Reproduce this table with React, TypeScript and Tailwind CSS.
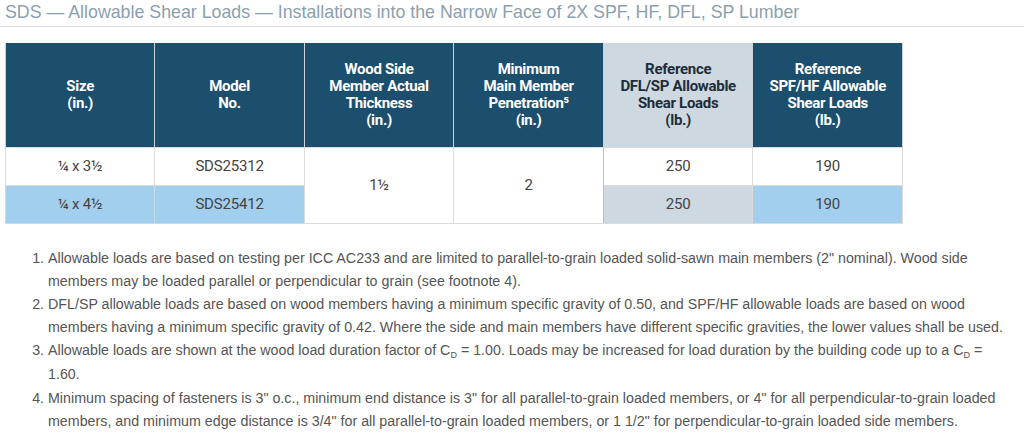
const headers = [
  { lines: ["Size", "(in.)"], tone: "dark" },
  { lines: ["Model", "No."], tone: "dark" },
  { lines: ["Wood Side", "Member Actual", "Thickness", "(in.)"], tone: "dark" },
  { lines: ["Minimum", "Main Member", "Penetration⁵", "(in.)"], tone: "dark" },
  { lines: ["Reference", "DFL/SP Allowable", "Shear Loads", "(lb.)"], tone: "light" },
  { lines: ["Reference", "SPF/HF Allowable", "Shear Loads", "(lb.)"], tone: "dark" },
];

export default function App() {
  return (
    <div className="min-h-[437px] bg-white font-['Liberation_Sans',Arial,sans-serif]">
      <div className="border-b border-[#d6dbe0] px-[5px] pt-[2px] pb-[4px]">
        <h1 className="text-[17.8px] leading-[20px] text-[#8b9fae]">
          SDS — Allowable Shear Loads — Installations into the Narrow Face of 2X SPF, HF, DFL, SP Lumber
        </h1>
      </div>

      <div className="px-[5px] pt-[16px]">
        <table className="w-[898px] border-collapse text-center font-['Roboto',Arial,sans-serif]">
          <thead>
            <tr className="h-[104px]">
              {headers.map((h, i) => (
                <th
                  key={i}
                  className={`w-[150px] border-x border-[#c9d2da] px-1 align-middle text-[15px] font-bold leading-[17px] tracking-[-0.3px] ${
                    h.tone === "dark" ? "bg-[#1c4e6d] text-white" : "bg-[#cdd8e1] text-[#1d2d3a]"
                  }`}
                >
                  {h.lines.map((l) => (
                    <div key={l}>{l}</div>
                  ))}
                </th>
              ))}
            </tr>
          </thead>
          <tbody className="text-[15px] tracking-[-0.2px] text-[#444]">
            <tr className="h-[38px]">
              <td className="border border-[#dcdcdc] bg-white">¼ x 3½</td>
              <td className="border border-[#dcdcdc] bg-white">SDS25312</td>
              <td rowSpan={2} className="border border-[#dcdcdc] bg-white">1½</td>
              <td rowSpan={2} className="border border-[#dcdcdc] border-r-[#b8c0c8] bg-white">2</td>
              <td className="border border-[#dcdcdc] bg-white">250</td>
              <td className="border border-[#dcdcdc] bg-white">190</td>
            </tr>
            <tr className="h-[38px]">
              <td className="border border-[#c6dcec] bg-[#a3cfee]">¼ x 4½</td>
              <td className="border border-[#c6dcec] bg-[#a3cfee]">SDS25412</td>
              <td className="border border-[#dcdcdc] bg-[#cdd8e1]">250</td>
              <td className="border border-[#dcdcdc] bg-[#a3cfee]">190</td>
            </tr>
          </tbody>
        </table>
      </div>

      <ol className="mt-[23px] w-[1012px] list-decimal pl-[48px] text-[14.25px] leading-[23.2px] text-[#555]">
        <li>
          Allowable loads are based on testing per ICC AC233 and are limited to parallel-to-grain loaded solid-sawn main
          members (2" nominal). Wood side members may be loaded parallel or perpendicular to grain (see footnote 4).
        </li>
        <li>
          DFL/SP allowable loads are based on wood members having a minimum specific gravity of 0.50, and SPF/HF
          allowable loads are based on wood members having a minimum specific gravity of 0.42. Where the side and main
          members have different specific gravities, the lower values shall be used.
        </li>
        <li>
          Allowable loads are shown at the wood load duration factor of C
          <span className="relative top-[3px] text-[9px] leading-none">D</span> = 1.00. Loads may be increased for load
          duration by the building code up to a C<span className="relative top-[3px] text-[9px] leading-none">D</span> =
          1.60.
        </li>
        <li className="mt-[1px]">
          Minimum spacing of fasteners is 3" o.c., minimum end distance is 3" for all parallel-to-grain loaded members,
          or 4" for all perpendicular-to-grain loaded members, and minimum edge distance is 3/4" for all
          parallel-to-grain loaded members, or 1 1/2" for perpendicular-to-grain loaded side members.
        </li>
      </ol>
    </div>
  );
}
